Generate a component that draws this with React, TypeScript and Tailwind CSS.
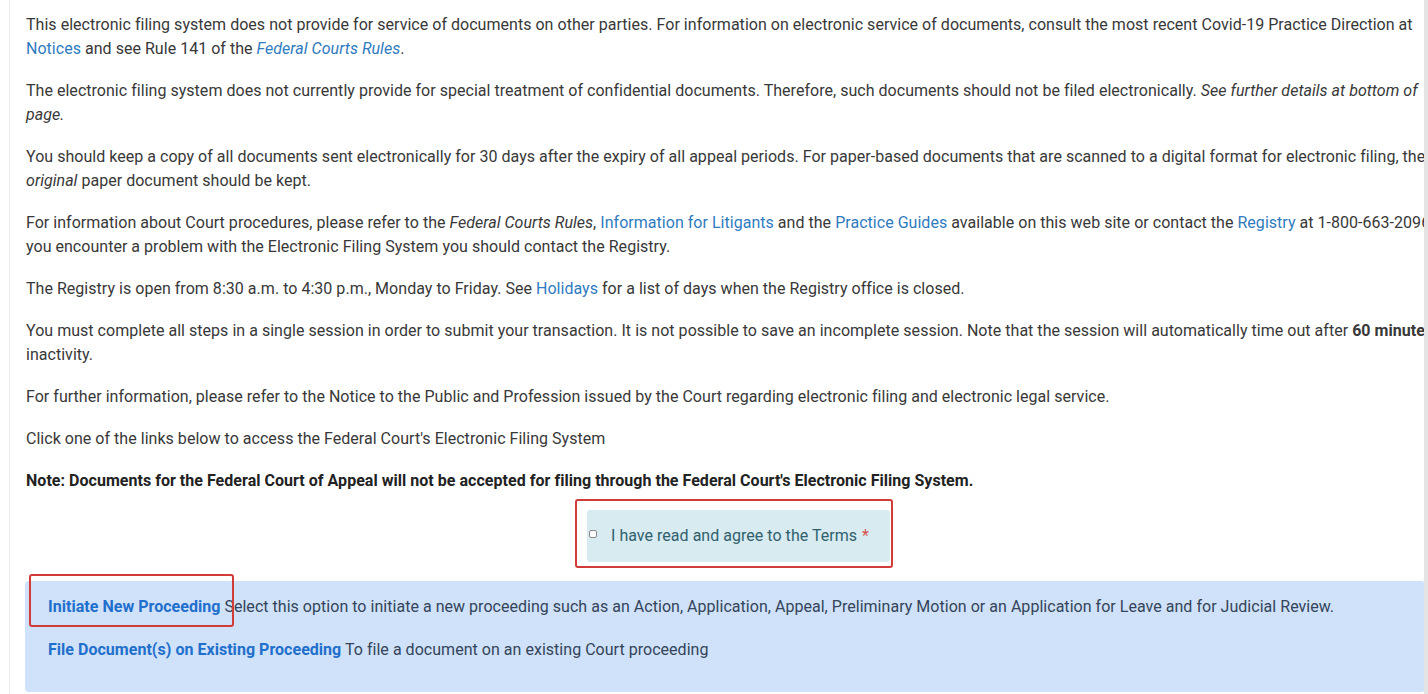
import React from "react";

const A = ({ children, i }: { children: React.ReactNode; i?: boolean }) => (
  <a href="#" className={"text-[#2f7bbf] no-underline" + (i ? " italic" : "")}>
    {children}
  </a>
);

export default function App() {
  return (
    <div className="relative flex w-[1428px] h-[694px] overflow-hidden bg-white font-['Roboto',_'Liberation_Sans',_sans-serif] text-[16px] leading-[24px] tracking-[0.03px] text-[#383838]">
      <div className="ml-[9px] w-[1415px] border-l border-[#ececec] overflow-hidden">
        <div className="w-[1441px] pl-[16px] pt-[13px] whitespace-nowrap">
          <p className="mb-[18px]">
            This electronic filing system does not provide for service of documents on other parties. For information on electronic service of documents, consult the most recent Covid-19 Practice Direction at
            <br />
            <A>Notices</A> and see Rule 141 of the <A i>Federal Courts Rules</A>.
          </p>
          <p className="mb-[18px]">
            The electronic filing system does not currently provide for special treatment of confidential documents. Therefore, such documents should not be filed electronically. <i>See further details at bottom of</i>
            <br />
            <i>page.</i>
          </p>
          <p className="mb-[18px]">
            You should keep a copy of all documents sent electronically for 30 days after the expiry of all appeal periods. For paper-based documents that are scanned to a digital format for electronic filing, the
            <br />
            <i>original</i> paper document should be kept.
          </p>
          <p className="mb-[18px]">
            For information about Court procedures, please refer to the <i>Federal Courts Rules</i>, <A>Information for Litigants</A> and the <A>Practice Guides</A> available on this web site or contact the <A>Registry</A> at 1-800-663-2096. If
            <br />
            you encounter a problem with the Electronic Filing System you should contact the Registry.
          </p>
          <p className="mb-[18px]">
            The Registry is open from 8:30 a.m. to 4:30 p.m., Monday to Friday. See <A>Holidays</A> for a list of days when the Registry office is closed.
          </p>
          <p className="mb-[18px]">
            You must complete all steps in a single session in order to submit your transaction. It is not possible to save an incomplete session. Note that the session will automatically time out after <b>60 minutes</b> of
            <br />
            inactivity.
          </p>
          <p className="mb-[18px]">
            For further information, please refer to the Notice to the Public and Profession issued by the Court regarding electronic filing and electronic legal service.
          </p>
          <p className="mb-[18px]">
            Click one of the links below to access the Federal Court's Electronic Filing System
          </p>
          <p className="mb-[17px] font-bold text-[#222]">
            Note: Documents for the Federal Court of Appeal will not be accepted for filing through the Federal Court's Electronic Filing System.
          </p>
          <div className="flex justify-center">
            <label className="flex items-center w-[303px] h-[52px] bg-[#d7ebf1] rounded-[3px] text-[#31606d] pl-[2px]">
              <span className="w-[8px] h-[8px] border border-[#8a8a8a] rounded-[2px] bg-white mr-[14px] mt-[-4px]" />
              I have read and agree to the Terms <span className="text-[#d9534f] ml-[5px]">*</span>
            </label>
          </div>
          <div className="mt-[19px] ml-[-1px] w-[1400px] h-[111px] bg-[#cfe2f9] rounded-[4px] pl-[23px] pt-[14px] text-[#34445a]">
            <p className="mb-[19px]">
              <a href="#" className="font-bold text-[#1f6fcc]">Initiate New Proceeding</a> Select this option to initiate a new proceeding such as an Action, Application, Appeal, Preliminary Motion or an Application for Leave and for Judicial Review.
            </p>
            <p>
              <a href="#" className="font-bold text-[#1f6fcc]">File Document(s) on Existing Proceeding</a> To file a document on an existing Court proceeding
            </p>
          </div>
        </div>
      </div>
      <div className="w-[4px] h-full bg-[#e4e4e4]" />
      <div className="absolute left-[575px] top-[499px] w-[318px] h-[69px] border-2 border-[#d13c38] rounded-[3px] pointer-events-none" />
      <div className="absolute left-[29px] top-[574px] w-[205px] h-[53px] border-2 border-[#d13c38] rounded-[3px] pointer-events-none" />
    </div>
  );
}
